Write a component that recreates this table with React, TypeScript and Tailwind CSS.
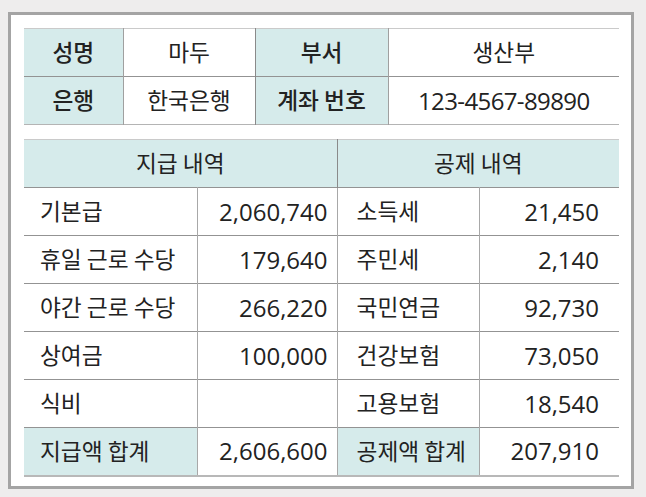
import React from 'react';

const head = 'bg-[#d6ebeb]';
const num = "text-[24px] font-['Open_Sans','Noto_Sans',sans-serif]";

interface PayRow {
  label: string;
  amount: string;
  dLabel: string;
  dAmount: string;
}

const rows: PayRow[] = [
  { label: '기본급', amount: '2,060,740', dLabel: '소득세', dAmount: '21,450' },
  { label: '휴일 근로 수당', amount: '179,640', dLabel: '주민세', dAmount: '2,140' },
  { label: '야간 근로 수당', amount: '266,220', dLabel: '국민연금', dAmount: '92,730' },
  { label: '상여금', amount: '100,000', dLabel: '건강보험', dAmount: '73,050' },
  { label: '식비', amount: '', dLabel: '고용보험', dAmount: '18,540' },
];

export default function App() {
  return (
    <div className="w-[646px] h-[497px] bg-[#eeeded] pt-3 pl-2 text-[#222] text-[22.7px] font-['Noto_Sans_CJK_KR','Noto_Sans',sans-serif]">
      <div className="w-[626px] h-[477px] border-[3px] border-[#a4a4a4] bg-white pt-[13px] pl-[13px]">
        {/* 인적 사항 */}
        <table className="w-[595px] border-collapse table-fixed">
          <colgroup>
            <col className="w-[99px]" />
            <col className="w-[132px]" />
            <col className="w-[133px]" />
            <col className="w-[231px]" />
          </colgroup>
          <tbody>
            <tr className="h-[48px] border-t border-[#cacaca] border-b border-b-[#939393]">
              <td className={`${head} text-center font-medium`}>성명</td>
              <td className="text-center border-l border-[#a0a0a0]">마두</td>
              <td className={`${head} text-center font-medium border-l border-[#8a8a8a]`}>부서</td>
              <td className="text-center border-l border-[#a0a0a0]">생산부</td>
            </tr>
            <tr className="h-[48px] border-b border-[#b4b4b4]">
              <td className={`${head} text-center font-medium`}>은행</td>
              <td className="text-center border-l border-[#a0a0a0]">한국은행</td>
              <td className={`${head} text-center font-medium border-l border-[#8a8a8a]`}>계좌 번호</td>
              <td className={`text-center border-l border-[#a0a0a0] tracking-[-0.6px] ${num}`}>123-4567-89890</td>
            </tr>
          </tbody>
        </table>

        {/* 지급 / 공제 내역 */}
        <table className="w-[595px] border-collapse table-fixed mt-[14px]">
          <colgroup>
            <col className="w-[173px]" />
            <col className="w-[140px]" />
            <col className="w-[142px]" />
            <col className="w-[140px]" />
          </colgroup>
          <tbody>
            <tr className={`h-[48px] ${head} border-t border-[#cacaca] border-b border-b-[#939393]`}>
              <td colSpan={2} className="text-center">지급 내역</td>
              <td colSpan={2} className="text-center border-l border-[#8a8a8a]">공제 내역</td>
            </tr>
            {rows.map((r) => (
              <tr key={r.label} className="h-[48px] border-b border-[#939393]">
                <td className="pl-4">{r.label}</td>
                <td className={`text-right pr-[9px] border-l border-[#a8a8a8] ${num}`}>{r.amount}</td>
                <td className="pl-[19px] border-l border-[#a8a8a8]">{r.dLabel}</td>
                <td className={`text-right pr-[20px] border-l border-[#a8a8a8] ${num}`}>{r.dAmount}</td>
              </tr>
            ))}
            <tr className="h-[48px] border-b-2 border-[#b8b8b8]">
              <td className={`${head} pl-4`}>지급액 합계</td>
              <td className={`text-right pr-[9px] border-l border-[#a8a8a8] ${num}`}>2,606,600</td>
              <td className={`${head} pl-[19px] border-l border-[#a8a8a8]`}>공제액 합계</td>
              <td className={`text-right pr-[20px] border-l border-[#a8a8a8] ${num}`}>207,910</td>
            </tr>
          </tbody>
        </table>
      </div>
    </div>
  );
}
